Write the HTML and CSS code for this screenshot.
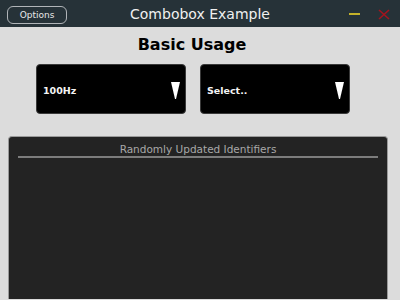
FILE: index.html
```html
<!DOCTYPE html>
<html>
<head>
<link rel="stylesheet" href="styles.css">
</head>
<body>

<div class="titlebar">
  <button class="options">Options</button>
  <div class="title">Combobox Example</div>
  <div class="controls">
    <span class="minimize"></span>
    <svg class="close" width="12" height="11" viewBox="0 0 12 11">
      <path d="M1 1 L11 10 M11 1 L1 10" stroke="#a3141e" stroke-width="1.6"/>
    </svg>
  </div>
</div>

<div class="content">
  <h1 class="heading">Basic Usage</h1>

  <div class="combos">
    <div class="combo">
      <span class="combo-text">100Hz</span>
      <svg class="arrow" width="9" height="17" viewBox="0 0 9 17">
        <polygon points="0,0 9,0 5,17 4,17" fill="#ffffff"/>
      </svg>
    </div>
    <div class="combo">
      <span class="combo-text">Select..</span>
      <svg class="arrow" width="9" height="17" viewBox="0 0 9 17">
        <polygon points="0,0 9,0 5,17 4,17" fill="#ffffff"/>
      </svg>
    </div>
  </div>

  <div class="panel">
    <div class="panel-title">Randomly Updated Identifiers</div>
    <div class="panel-rule"></div>
  </div>
</div>

</body>
</html>
```
FILE: styles.css
```css
html, body {
    margin: 0;
    padding: 0;
    height: 300px;
    overflow: hidden;
}

body {
    background: #dcdcdc;
    font-family: "DejaVu Sans", Verdana, sans-serif;
}

.titlebar {
    height: 27px;
    background-color: #263238;
    display: flex;
    align-items: center;
    padding: 0 7px;
}

.options {
    width: 60px;
    height: 18px;
    background: transparent;
    border: 1px solid #b0b4b8;
    border-radius: 6px;
    color: #e8e8e8;
    font-family: "DejaVu Sans", sans-serif;
    font-size: 9px;
    padding: 0;
    margin-top: 3px;
}

.title {
    flex: 1;
    text-align: center;
    color: #f0f0f0;
    font-size: 14px;
    margin-left: -16px;
    margin-top: 1px;
}

.controls {
    display: flex;
    align-items: center;
    gap: 18px;
    margin-right: 3px;
    margin-top: 1px;
}

.minimize {
    width: 11px;
    height: 2px;
    background-color: #c4b22a;
}

.close {
    display: block;
}

.content {
    padding: 0 8px;
}

.heading {
    margin: 8px 0 0;
    text-align: center;
    font-size: 16px;
    font-weight: bold;
    color: #000;
    line-height: 20px;
    margin-left: -16px;
}

.combos {
    display: flex;
    gap: 14px;
    margin-top: 9px;
    padding-left: 28px;
}

.combo {
    width: 150px;
    height: 50px;
    box-sizing: border-box;
    background: #000;
    border: 1px solid #3a3a3a;
    border-radius: 4px;
    display: flex;
    align-items: center;
    justify-content: space-between;
    padding: 2px 5px 0 6px;
}

.combo-text {
    color: #f4f4f4;
    font-weight: bold;
    font-size: 9.5px;
}

.arrow {
    display: block;
}

.panel {
    margin-top: 22px;
    width: 380px;
    height: 163px;
    box-sizing: border-box;
    background: #232323;
    border: 1px solid #9a9a9a;
    border-bottom: 0;
    border-radius: 4px 4px 0 0;
    padding: 5px 9px 0;
}

.panel-title {
    text-align: center;
    color: #a8a8a8;
    font-size: 10.5px;
    line-height: 14px;
}

.panel-rule {
    height: 2px;
    background: #7c7c7c;
}
```
